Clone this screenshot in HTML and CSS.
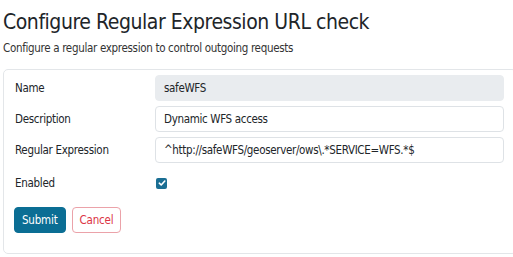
FILE: index.html
```html
<!DOCTYPE html>
<html lang="en">

<head>
    <meta charset="UTF-8">
    <meta name="viewport" content="width=device-width, initial-scale=1.0">
    <title>Configure Regular Expression URL check</title>
    <link rel="stylesheet" href="styles.css">
</head>

<body>
    <h1 class="page-title">Configure Regular Expression URL check</h1>
    <p class="page-subtitle">Configure a regular expression to control outgoing requests</p>

    <form class="card">
        <div class="form-grid">
            <label class="form-label" for="name">Name</label>
            <input type="text" id="name" class="form-input" value="safeWFS" readonly>

            <label class="form-label" for="description">Description</label>
            <input type="text" id="description" class="form-input" value="Dynamic WFS access">

            <label class="form-label" for="regex">Regular Expression</label>
            <input type="text" id="regex" class="form-input" value="^http://safeWFS/geoserver/ows\.*SERVICE=WFS.*$">

            <label class="form-label" for="enabled">Enabled</label>
            <div class="check-cell">
                <span class="check-box" id="enabled">
                    <svg width="8" height="8" viewBox="0 0 8 8">
                        <path d="M1.3 4.2 L3.2 6 L6.8 2" fill="none" stroke="#fff" stroke-width="1.6" stroke-linecap="round" stroke-linejoin="round"/>
                    </svg>
                </span>
            </div>
        </div>

        <div class="form-actions">
            <button type="button" class="btn btn-submit">Submit</button>
            <button type="button" class="btn btn-cancel">Cancel</button>
        </div>
    </form>
</body>

</html>
```

FILE: styles.css
```css
body {
    font-family: "DejaVu Sans Condensed", "DejaVu Sans", sans-serif;
    color: #212529;
    margin: 0;
    padding: 0 0 0 3px;
    overflow: hidden;
}

.page-title {
    font-size: 21px;
    font-weight: normal;
    letter-spacing: -0.45px;
    line-height: 26px;
    margin: 9px 0 0;
}

.page-subtitle {
    font-size: 11.5px;
    letter-spacing: -0.32px;
    line-height: 16px;
    color: #333;
    margin: 5px 0 0;
}

.card {
    margin-top: 13px;
    margin-right: -4px;
    border: 1px solid #e3e6e9;
    border-radius: 5px;
    padding: 5px 12px 20px 11px;
}

.form-grid {
    display: grid;
    grid-template-columns: 140px 1fr;
    row-gap: 5px;
    align-items: center;
}

.form-label {
    font-size: 11.5px;
    letter-spacing: -0.3px;
}

.form-input {
    font-family: inherit;
    font-size: 11.5px;
    letter-spacing: -0.33px;
    color: #212529;
    height: 26px;
    box-sizing: border-box;
    border: 1px solid #dee2e6;
    border-radius: 4px;
    padding: 0 8px;
    outline: none;
}

.form-input[readonly] {
    background-color: #e9ecef;
    border-color: #e9ecef;
}

.check-cell {
    height: 30px;
    display: flex;
    align-items: center;
}

.check-box {
    width: 11px;
    height: 11px;
    margin-left: 1px;
    border-radius: 2px;
    background-color: #1a6e93;
    display: flex;
    align-items: center;
    justify-content: center;
}

.form-actions {
    display: flex;
    gap: 6px;
    margin-top: 9px;
}

.btn {
    font-family: inherit;
    font-size: 11.5px;
    letter-spacing: -0.2px;
    height: 26px;
    padding: 0 7px;
    border-radius: 4px;
    cursor: pointer;
}

.btn-submit {
    background-color: #0b6e94;
    border: 1px solid #0b6e94;
    color: white;
    margin-left: -1px;
}

.btn-cancel {
    background-color: white;
    border: 1px solid #eba2a9;
    color: #dc3545;
}
```
